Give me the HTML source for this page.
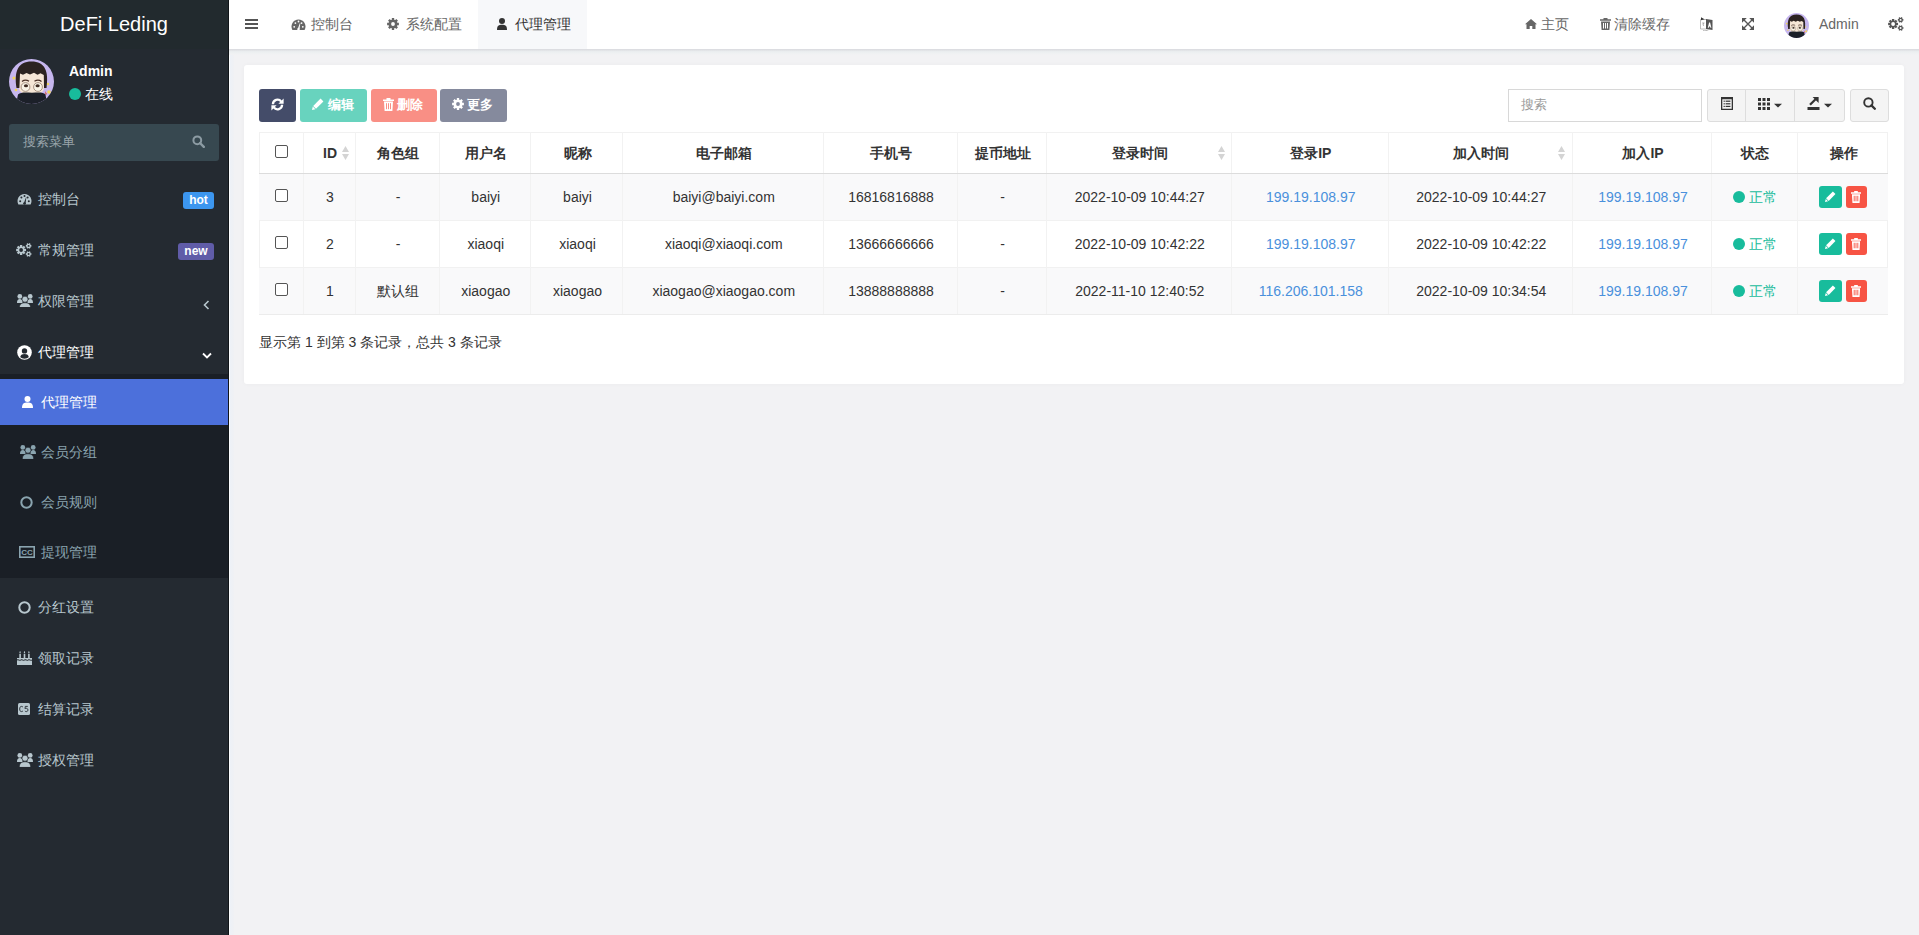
<!DOCTYPE html>
<html><head><meta charset="utf-8">
<style>
*{margin:0;padding:0;box-sizing:border-box}
html,body{width:1919px;height:935px;overflow:hidden;background:#f2f2f4;font-family:"Liberation Sans",sans-serif;font-size:14px;color:#333}
.abs{position:absolute}
svg{display:block}
/* sidebar */
#side{position:absolute;left:0;top:0;width:229px;height:935px;background:#242a31}
#side .edge{position:absolute;left:228px;top:0;width:1px;height:935px;background:#111519;z-index:5}
#logo{position:absolute;left:0;top:0;width:228px;height:49px;line-height:49px;text-align:center;color:#fff;font-size:20px;background:#222a2e}
.mi{position:absolute;left:0;width:228px;height:51px;color:#b8c7ce;font-size:14px}
.mi .t{position:absolute;left:38px;top:0;line-height:51px}
.mi .ic{position:absolute;left:17px;top:19px}
.sub{position:absolute;left:0;top:374px;width:228px;height:204px;background:#1a1f26}
.si{position:absolute;left:0;width:228px;height:50px;color:#8aa4af;font-size:14px}
.si .t{position:absolute;left:41px;top:0;line-height:50px}
.si .ic{position:absolute;left:20px;top:18px}
/* header */
#hdr{position:absolute;left:229px;top:0;width:1690px;height:49px;background:#fff}
#hdrline{position:absolute;left:229px;top:49px;width:1690px;height:6px;background:linear-gradient(#dcdde1 0,#dcdde1 1px,#e9ecee 2px,#eef1f2 4px,#f2f2f4 6px)}
.tab{position:absolute;top:0;height:49px;line-height:48px;color:#666;font-size:14px}
/* panel */
#panel{position:absolute;left:244px;top:65px;width:1660px;height:319px;background:#fff;border-radius:3px;box-shadow:0 0 4px rgba(0,0,0,.035)}
.btn{position:absolute;top:89px;height:33px;border-radius:3px;color:#fff;font-size:13px;line-height:31px}
.ok{color:#18bc9c}
.tc{text-align:center;line-height:18px;white-space:nowrap;color:#333}
.th{font-weight:bold}
.tc.ip{color:#4a90dc}
.cb{width:13px;height:13px;border:1px solid #555;border-radius:2px;background:#fff}
.c{display:inline-block;width:1em;text-align:center;font-style:normal}
</style></head><body>

<div id="side">
  <div class="edge"></div>
  <div id="logo">DeFi Leding</div>
  <svg class="abs" style="left:9px;top:59px" width="45" height="45" viewBox="0 0 45 45"><defs><clipPath id="av"><circle cx="22.5" cy="22.5" r="22.5"/></clipPath></defs>
    <g clip-path="url(#av)">
      <rect width="45" height="45" fill="#c6b6ee"/>
      <circle cx="5" cy="19" r="1.6" fill="#f2d65a"/><circle cx="7" cy="31" r="1.3" fill="#f2d65a"/><circle cx="40" cy="33" r="1.8" fill="#f2d65a"/><circle cx="39" cy="25" r="1.2" fill="#f2d65a"/>
      <path d="M36 32 L38 35 L36.5 36 Z" fill="#e0584a"/>
      <path d="M10.5 13 L35 13 L35 29 C34.5 33.5 31 35.5 22.5 35.5 C14 35.5 10.5 33.5 10 29 Z" fill="#f6e6d6"/>
      <path d="M7.5 29 C5 12 9 2.5 22.5 2.5 C36 2.5 40 12 37.5 29 L35 29 L34.8 16 L31.5 14.2 L28.5 15.8 L25 13.8 L21 15.6 L17.5 14 L14 15.8 L11 14.6 L10.4 29 Z" fill="#2c2321"/>
      <path d="M13 22.5 C15 21 18 21 20 22.3 M25.5 22.3 C27.5 21 30.5 21 32.5 22.5" stroke="#4a3026" stroke-width="1.3" fill="none"/>
      <circle cx="16.5" cy="28" r="4.4" fill="#f9f3e6" stroke="#a08a7a" stroke-width="0.9"/>
      <circle cx="29" cy="28" r="4.4" fill="#f9f3e6" stroke="#a08a7a" stroke-width="0.9"/>
      <ellipse cx="17" cy="26.8" rx="2.1" ry="1.5" fill="#3e2a22"/>
      <ellipse cx="28.6" cy="26.8" rx="2.1" ry="1.5" fill="#3e2a22"/>
      <path d="M7 45 L9 35.5 C12 33 16 33.3 23 33.8 C30 33.3 34 33 36.5 35.5 L38 45 Z" fill="#1c2029"/>
    </g></svg>
  <div class="abs" style="left:69px;top:62px;font-weight:bold;color:#fff;font-size:14px;line-height:18px">Admin</div>
  <div class="abs" style="left:69px;top:88px;width:12px;height:12px;border-radius:50%;background:#18bc9c"></div>
  <div class="abs" style="left:85px;top:85px;color:#fff;font-size:14px;line-height:18px"><i class="c">在</i><i class="c">线</i></div>
  <div class="abs" style="left:9px;top:124px;width:210px;height:37px;border-radius:3px;background:#374850"></div>
  <div class="abs" style="left:23px;top:133px;color:#9aa5ab;font-size:13px;line-height:18px"><i class="c">搜</i><i class="c">索</i><i class="c">菜</i><i class="c">单</i></div>
  <svg class="abs" style="left:192px;top:135px" width="13" height="13" viewBox="0 0 13 13"><circle cx="5.3" cy="5.3" r="3.9" fill="none" stroke="#8c9ba3" stroke-width="2"/><path d="M8 8 L11.8 11.8" stroke="#8c9ba3" stroke-width="2.4" stroke-linecap="round"/></svg>

  <!-- menu -->
  <div class="mi" style="top:174px"><svg class="ic" style="top:19px" width="15" height="12" viewBox="0 0 15 12"><path d="M1.4 11.5 A7 7 0 1 1 13.6 11.5 Z" fill="#b8c7ce"/><g fill="#242a31"><circle cx="3.2" cy="8.3" r="1"/><circle cx="4.4" cy="4.6" r="1"/><circle cx="7.5" cy="3" r="1"/><circle cx="10.6" cy="4.6" r="1"/><circle cx="11.8" cy="8.3" r="1"/><path d="M6.5 11 L9 4.3 L9.3 4.4 L8.5 11 Z"/><circle cx="7.5" cy="10.5" r="1.3"/></g></svg><span class="t"><i class="c">控</i><i class="c">制</i><i class="c">台</i></span></div>
  <div class="abs" style="left:183px;top:192px;width:31px;height:17px;border-radius:3px;background:#3c96ef;color:#fff;font-weight:bold;font-size:12px;line-height:16px;text-align:center">hot</div>

  <div class="mi" style="top:225px"><svg class="ic" style="top:18px;left:16px" width="16" height="14" viewBox="0 0 16 14"><g fill="#b8c7ce" fill-rule="evenodd"><path d="M8.63 5.88 L10.06 5.81 L10.06 8.19 L8.63 8.12 L8.38 8.71 L9.45 9.66 L7.76 11.35 L6.81 10.28 L6.22 10.53 L6.29 11.96 L3.91 11.96 L3.98 10.53 L3.39 10.28 L2.44 11.35 L0.75 9.66 L1.82 8.71 L1.57 8.12 L0.14 8.19 L0.14 5.81 L1.57 5.88 L1.82 5.29 L0.75 4.34 L2.44 2.65 L3.39 3.72 L3.98 3.47 L3.91 2.04 L6.29 2.04 L6.22 3.47 L6.81 3.72 L7.76 2.65 L9.45 4.34 L8.38 5.29 Z M7.00 7.00 A1.9 1.9 0 1 0 3.20 7.00 A1.9 1.9 0 1 0 7.00 7.00 Z"/><path d="M14.44 2.11 L15.36 2.00 L15.36 3.80 L14.44 3.69 L14.21 4.09 L14.76 4.84 L13.20 5.74 L12.83 4.89 L12.37 4.89 L12.00 5.74 L10.44 4.84 L10.99 4.09 L10.76 3.69 L9.84 3.80 L9.84 2.00 L10.76 2.11 L10.99 1.71 L10.44 0.96 L12.00 0.06 L12.37 0.91 L12.83 0.91 L13.20 0.06 L14.76 0.96 L14.21 1.71 Z M13.55 2.90 A0.95 0.95 0 1 0 11.65 2.90 A0.95 0.95 0 1 0 13.55 2.90 Z"/><path d="M14.44 10.21 L15.36 10.10 L15.36 11.90 L14.44 11.79 L14.21 12.19 L14.76 12.94 L13.20 13.84 L12.83 12.99 L12.37 12.99 L12.00 13.84 L10.44 12.94 L10.99 12.19 L10.76 11.79 L9.84 11.90 L9.84 10.10 L10.76 10.21 L10.99 9.81 L10.44 9.06 L12.00 8.16 L12.37 9.01 L12.83 9.01 L13.20 8.16 L14.76 9.06 L14.21 9.81 Z M13.55 11.00 A0.95 0.95 0 1 0 11.65 11.00 A0.95 0.95 0 1 0 13.55 11.00 Z"/></g></svg><span class="t"><i class="c">常</i><i class="c">规</i><i class="c">管</i><i class="c">理</i></span></div>
  <div class="abs" style="left:178px;top:243px;width:36px;height:17px;border-radius:3px;background:#605ca8;color:#fff;font-weight:bold;font-size:12px;line-height:16px;text-align:center">new</div>

  <div class="mi" style="top:276px"><svg class="ic" style="top:18px" width="16" height="13" viewBox="0 0 16 13"><g fill="#b8c7ce"><circle cx="2.8" cy="2.4" r="2.4"/><circle cx="13.2" cy="2.4" r="2.4"/><path d="M0 9 C0 6 1 5 2.8 5 C4.6 5 5.6 6 5.6 9 Z"/><path d="M16 9 C16 6 15 5 13.2 5 C11.4 5 10.4 6 10.4 9 Z"/></g><g fill="#b8c7ce" stroke="#242a31" stroke-width="0.6"><circle cx="8" cy="5.2" r="3"/><path d="M2.3 14.4 C2.3 10.4 4.4 8.8 8 8.8 C11.6 8.8 13.7 10.4 13.7 14.4 Z"/></g></svg><span class="t"><i class="c">权</i><i class="c">限</i><i class="c">管</i><i class="c">理</i></span>
    <svg class="abs" style="left:203px;top:24px" width="7" height="10" viewBox="0 0 7 10"><path d="M5.5 1 L1.5 5 L5.5 9" fill="none" stroke="#b8c7ce" stroke-width="1.6"/></svg></div>

  <div class="mi" style="top:327px;color:#fff"><svg class="ic" style="top:18px" width="15" height="15" viewBox="0 0 15 15"><circle cx="7.5" cy="7.5" r="7.3" fill="#fff"/><circle cx="7.5" cy="5.9" r="2.7" fill="#242a31"/><path d="M3.2 12 C3.8 9.6 5.4 9 7.5 9 C9.6 9 11.2 9.6 11.8 12 C10.7 13.1 9.2 13.7 7.5 13.7 C5.8 13.7 4.3 13.1 3.2 12Z" fill="#242a31"/></svg><span class="t"><i class="c">代</i><i class="c">理</i><i class="c">管</i><i class="c">理</i></span>
    <svg class="abs" style="left:202px;top:25px" width="10" height="7" viewBox="0 0 10 7"><path d="M1 1.5 L5 5.5 L9 1.5" fill="none" stroke="#fff" stroke-width="1.8"/></svg></div>

  <div class="sub">
    <div class="abs" style="left:0;top:5px;width:228px;height:46px;background:#4c70db"></div>
  </div>
  <div class="si" style="top:377px;color:#fff"><svg class="ic" style="top:19px;left:22px" width="11" height="12" viewBox="0 0 11 12"><circle cx="5.5" cy="3" r="3" fill="#fff"/><path d="M0 12 C0 7.5 2 6.5 5.5 6.5 C9 6.5 11 7.5 11 12Z" fill="#fff"/></svg><span class="t"><i class="c">代</i><i class="c">理</i><i class="c">管</i><i class="c">理</i></span></div>
  <div class="si" style="top:427px"><svg class="ic" style="top:18px" width="16" height="14" viewBox="0 0 16 14"><g fill="#8aa4af"><circle cx="2.8" cy="2.4" r="2.4"/><circle cx="13.2" cy="2.4" r="2.4"/><path d="M0 9 C0 6 1 5 2.8 5 C4.6 5 5.6 6 5.6 9 Z"/><path d="M16 9 C16 6 15 5 13.2 5 C11.4 5 10.4 6 10.4 9 Z"/></g><g fill="#8aa4af" stroke="#1a1f26" stroke-width="0.6"><circle cx="8" cy="5.2" r="3"/><path d="M2.3 14.4 C2.3 10.4 4.4 8.8 8 8.8 C11.6 8.8 13.7 10.4 13.7 14.4 Z"/></g></svg><span class="t"><i class="c">会</i><i class="c">员</i><i class="c">分</i><i class="c">组</i></span></div>
  <div class="si" style="top:477px"><svg class="ic" style="top:19px;left:20px" width="13" height="13" viewBox="0 0 13 13"><circle cx="6.5" cy="6.5" r="5.2" fill="none" stroke="#8aa4af" stroke-width="2"/></svg><span class="t"><i class="c">会</i><i class="c">员</i><i class="c">规</i><i class="c">则</i></span></div>
  <div class="si" style="top:527px"><svg class="ic" style="top:19px;left:19px" width="16" height="12" viewBox="0 0 16 12"><rect x="0.8" y="0.8" width="14.4" height="10.4" fill="none" stroke="#8aa4af" stroke-width="1.6"/><text x="8" y="9.3" font-size="8" font-weight="bold" text-anchor="middle" fill="#8aa4af" font-family="Liberation Sans">CC</text></svg><span class="t"><i class="c">提</i><i class="c">现</i><i class="c">管</i><i class="c">理</i></span></div>

  <div class="mi" style="top:582px"><svg class="ic" style="top:19px;left:18px" width="13" height="13" viewBox="0 0 13 13"><circle cx="6.5" cy="6.5" r="5.2" fill="none" stroke="#b8c7ce" stroke-width="2"/></svg><span class="t"><i class="c">分</i><i class="c">红</i><i class="c">设</i><i class="c">置</i></span></div>
  <div class="mi" style="top:633px"><svg class="ic" style="top:18px" width="15" height="14" viewBox="0 0 15 14"><g fill="#b8c7ce"><path d="M0 9.5 C1.5 8.5 2.5 10.5 3.75 9.5 C5 8.5 6.2 10.5 7.5 9.5 C8.8 8.5 10 10.5 11.25 9.5 C12.5 8.5 13.5 10.5 15 9.5 L15 14 L0 14 Z"/><path d="M0 7 L15 7 L15 8.6 C13.5 9.6 12.5 7.6 11.25 8.6 C10 9.6 8.8 7.6 7.5 8.6 C6.2 9.6 5 7.6 3.75 8.6 C2.5 9.6 1.5 7.6 0 8.6 Z"/><rect x="2.3" y="2.8" width="1.6" height="4.2"/><rect x="6.7" y="2.8" width="1.6" height="4.2"/><rect x="11.1" y="2.8" width="1.6" height="4.2"/><path d="M3.1 0 C4 1 4 2 3.1 2.3 C2.2 2 2.2 1 3.1 0Z M7.5 0 C8.4 1 8.4 2 7.5 2.3 C6.6 2 6.6 1 7.5 0Z M11.9 0 C12.8 1 12.8 2 11.9 2.3 C11 2 11 1 11.9 0Z"/></g></svg><span class="t"><i class="c">领</i><i class="c">取</i><i class="c">记</i><i class="c">录</i></span></div>
  <div class="mi" style="top:684px"><svg class="ic" style="top:19px;left:18px" width="12" height="12" viewBox="0 0 12 12"><rect x="0" y="0" width="12" height="12" rx="1.5" fill="#b8c7ce"/><path d="M5 4.2 C4.6 3.6 4 3.4 3.4 3.4 C2.3 3.4 1.7 4.4 1.7 6 C1.7 7.6 2.3 8.6 3.4 8.6 C4 8.6 4.6 8.4 5 7.8" fill="none" stroke="#242a31" stroke-width="0.9"/><path d="M9.8 3.4 L7.3 3.4 L7 5.7 C7.4 5.4 7.9 5.3 8.3 5.3 C9.3 5.3 9.9 6 9.9 7 C9.9 8 9.2 8.6 8.3 8.6 C7.7 8.6 7.2 8.4 6.9 8" fill="none" stroke="#242a31" stroke-width="0.9"/></svg><span class="t"><i class="c">结</i><i class="c">算</i><i class="c">记</i><i class="c">录</i></span></div>
  <div class="mi" style="top:735px"><svg class="ic" style="top:18px" width="16" height="14" viewBox="0 0 16 14"><g fill="#b8c7ce"><circle cx="2.8" cy="2.4" r="2.4"/><circle cx="13.2" cy="2.4" r="2.4"/><path d="M0 9 C0 6 1 5 2.8 5 C4.6 5 5.6 6 5.6 9 Z"/><path d="M16 9 C16 6 15 5 13.2 5 C11.4 5 10.4 6 10.4 9 Z"/></g><g fill="#b8c7ce" stroke="#242a31" stroke-width="0.6"><circle cx="8" cy="5.2" r="3"/><path d="M2.3 14.4 C2.3 10.4 4.4 8.8 8 8.8 C11.6 8.8 13.7 10.4 13.7 14.4 Z"/></g></svg><span class="t"><i class="c">授</i><i class="c">权</i><i class="c">管</i><i class="c">理</i></span></div>
</div>

<div class="abs" style="left:229px;top:49px;width:1px;height:886px;background:#fafcfe"></div>
<div class="abs" style="left:230px;top:49px;width:4px;height:886px;background:linear-gradient(90deg,#edf1f7,#f0f1f4)"></div>
<div id="hdr">
  <svg class="abs" style="left:16px;top:19px" width="13" height="10" viewBox="0 0 13 10"><g fill="#555"><rect y="0" width="13" height="2"/><rect y="4" width="13" height="2"/><rect y="8" width="13" height="2"/></g></svg>
  <svg class="abs" style="left:62px;top:19px" width="15" height="11" viewBox="0 0 15 11"><path d="M1.4 11 A7 7 0 1 1 13.6 11 Z" fill="#666"/><g fill="#fff"><circle cx="3.2" cy="7.8" r="0.9"/><circle cx="4.4" cy="4.1" r="0.9"/><circle cx="7.5" cy="2.5" r="0.9"/><circle cx="10.6" cy="4.1" r="0.9"/><circle cx="11.8" cy="7.8" r="0.9"/><path d="M6.5 10.6 L9 3.8 L9.3 3.9 L8.5 10.6 Z"/><circle cx="7.5" cy="10.1" r="1.2"/></g></svg>
  <div class="tab" style="left:82px"><i class="c">控</i><i class="c">制</i><i class="c">台</i></div>
  <svg class="abs" style="left:158px;top:18px" width="12" height="12" viewBox="0 0 12 12"><path fill-rule="evenodd" d="M10.35 4.86 L11.88 4.83 L11.88 7.17 L10.35 7.14 L9.88 8.28 L10.99 9.33 L9.33 10.99 L8.28 9.88 L7.14 10.35 L7.17 11.88 L4.83 11.88 L4.86 10.35 L3.72 9.88 L2.67 10.99 L1.01 9.33 L2.12 8.28 L1.65 7.14 L0.12 7.17 L0.12 4.83 L1.65 4.86 L2.12 3.72 L1.01 2.67 L2.67 1.01 L3.72 2.12 L4.86 1.65 L4.83 0.12 L7.17 0.12 L7.14 1.65 L8.28 2.12 L9.33 1.01 L10.99 2.67 L9.88 3.72 Z M7.90 6.00 A1.9 1.9 0 1 0 4.10 6.00 A1.9 1.9 0 1 0 7.90 6.00 Z" fill="#666"/></svg>
  <div class="tab" style="left:177px"><i class="c">系</i><i class="c">统</i><i class="c">配</i><i class="c">置</i></div>
  <div class="abs" style="left:249px;top:0;width:109px;height:49px;background:#f7f8fa"></div>
  <svg class="abs" style="left:268px;top:18px" width="10" height="12" viewBox="0 0 10 12"><circle cx="5" cy="3" r="3" fill="#333"/><path d="M0 12 C0 7.5 1.8 6.8 5 6.8 C8.2 6.8 10 7.5 10 12Z" fill="#333"/></svg>
  <div class="tab" style="left:286px;color:#333"><i class="c">代</i><i class="c">理</i><i class="c">管</i><i class="c">理</i></div>

  <svg class="abs" style="left:1296px;top:19px" width="12" height="10" viewBox="0 0 12 10"><path d="M6 0 L12 5.2 L10.5 5.2 L10.5 10 L7.3 10 L7.3 7 L4.7 7 L4.7 10 L1.5 10 L1.5 5.2 L0 5.2 Z" fill="#666"/></svg>
  <div class="tab" style="left:1312px"><i class="c">主</i><i class="c">页</i></div>
  <svg class="abs" style="left:1371px;top:18px" width="11" height="12" viewBox="0 0 11 12"><path d="M3.5 0h4v1.2h3.5v1.6h-11v-1.6h3.5zM1 3.5h9l-0.6 8.5h-7.8z" fill="#666"/><g fill="#fff"><rect x="3" y="5" width="1" height="5.5"/><rect x="5" y="5" width="1" height="5.5"/><rect x="7" y="5" width="1" height="5.5"/></g></svg>
  <div class="tab" style="left:1385px"><i class="c">清</i><i class="c">除</i><i class="c">缓</i><i class="c">存</i></div>
  <svg class="abs" style="left:1471px;top:17px" width="13" height="14" viewBox="0 0 13 14"><path d="M0.5 2.5 L6.5 2.5 L6.5 12 L0.5 12 Z" fill="#fff" stroke="#aaa" stroke-width="0.8"/><path d="M6 2 L12.5 3 L12.5 13 L6 12 Z" fill="#555"/><path d="M7.8 10.8 L9.1 5.5 L10.1 5.5 L11.4 10.8 L10.4 10.8 L10.1 9.4 L9.1 9.4 L8.8 10.8Z" fill="#fff"/><path d="M1 0.3 L4.5 2.3 L1 3.2 Z" fill="#333"/><path d="M2.5 7 L4.5 6 M3 5 L3.5 9" stroke="#999" stroke-width="0.7"/><path d="M3 13.6 C5 14 7 13.6 8.5 12.8" stroke="#999" stroke-width="0.7" fill="none"/></svg>
  <svg class="abs" style="left:1513px;top:18px" width="12" height="12" viewBox="0 0 12 12"><path d="M1.5 1.5 L10.5 10.5 M10.5 1.5 L1.5 10.5" stroke="#555" stroke-width="1.4"/><path d="M0 0 H4.8 L0 4.8 Z M12 0 V4.8 L7.2 0 Z M0 12 V7.2 L4.8 12 Z M12 12 H7.2 L12 7.2 Z" fill="#555"/></svg>
  <svg class="abs" style="left:1555px;top:13px" width="25" height="25" viewBox="0 0 45 45"><defs><clipPath id="av2"><circle cx="22.5" cy="22.5" r="22.5"/></clipPath></defs>
    <g clip-path="url(#av2)">
      <rect width="45" height="45" fill="#c6b6ee"/>
      <circle cx="5" cy="19" r="1.6" fill="#f2d65a"/><circle cx="7" cy="31" r="1.3" fill="#f2d65a"/><circle cx="40" cy="33" r="1.8" fill="#f2d65a"/><circle cx="39" cy="25" r="1.2" fill="#f2d65a"/>
      <path d="M36 32 L38 35 L36.5 36 Z" fill="#e0584a"/>
      <path d="M10.5 13 L35 13 L35 29 C34.5 33.5 31 35.5 22.5 35.5 C14 35.5 10.5 33.5 10 29 Z" fill="#f6e6d6"/>
      <path d="M7.5 29 C5 12 9 2.5 22.5 2.5 C36 2.5 40 12 37.5 29 L35 29 L34.8 16 L31.5 14.2 L28.5 15.8 L25 13.8 L21 15.6 L17.5 14 L14 15.8 L11 14.6 L10.4 29 Z" fill="#2c2321"/>
      <path d="M13 22.5 C15 21 18 21 20 22.3 M25.5 22.3 C27.5 21 30.5 21 32.5 22.5" stroke="#4a3026" stroke-width="1.3" fill="none"/>
      <circle cx="16.5" cy="28" r="4.4" fill="#f9f3e6" stroke="#a08a7a" stroke-width="0.9"/>
      <circle cx="29" cy="28" r="4.4" fill="#f9f3e6" stroke="#a08a7a" stroke-width="0.9"/>
      <ellipse cx="17" cy="26.8" rx="2.1" ry="1.5" fill="#3e2a22"/>
      <ellipse cx="28.6" cy="26.8" rx="2.1" ry="1.5" fill="#3e2a22"/>
      <path d="M7 45 L9 35.5 C12 33 16 33.3 23 33.8 C30 33.3 34 33 36.5 35.5 L38 45 Z" fill="#1c2029"/>
    </g></svg>
  <div class="tab" style="left:1590px">Admin</div>
  <svg class="abs" style="left:1659px;top:17px" width="16" height="14" viewBox="0 0 16 14"><g fill="#555" fill-rule="evenodd"><path d="M8.63 5.88 L10.06 5.81 L10.06 8.19 L8.63 8.12 L8.38 8.71 L9.45 9.66 L7.76 11.35 L6.81 10.28 L6.22 10.53 L6.29 11.96 L3.91 11.96 L3.98 10.53 L3.39 10.28 L2.44 11.35 L0.75 9.66 L1.82 8.71 L1.57 8.12 L0.14 8.19 L0.14 5.81 L1.57 5.88 L1.82 5.29 L0.75 4.34 L2.44 2.65 L3.39 3.72 L3.98 3.47 L3.91 2.04 L6.29 2.04 L6.22 3.47 L6.81 3.72 L7.76 2.65 L9.45 4.34 L8.38 5.29 Z M7.00 7.00 A1.9 1.9 0 1 0 3.20 7.00 A1.9 1.9 0 1 0 7.00 7.00 Z"/><path d="M14.44 2.11 L15.36 2.00 L15.36 3.80 L14.44 3.69 L14.21 4.09 L14.76 4.84 L13.20 5.74 L12.83 4.89 L12.37 4.89 L12.00 5.74 L10.44 4.84 L10.99 4.09 L10.76 3.69 L9.84 3.80 L9.84 2.00 L10.76 2.11 L10.99 1.71 L10.44 0.96 L12.00 0.06 L12.37 0.91 L12.83 0.91 L13.20 0.06 L14.76 0.96 L14.21 1.71 Z M13.55 2.90 A0.95 0.95 0 1 0 11.65 2.90 A0.95 0.95 0 1 0 13.55 2.90 Z"/><path d="M14.44 10.21 L15.36 10.10 L15.36 11.90 L14.44 11.79 L14.21 12.19 L14.76 12.94 L13.20 13.84 L12.83 12.99 L12.37 12.99 L12.00 13.84 L10.44 12.94 L10.99 12.19 L10.76 11.79 L9.84 11.90 L9.84 10.10 L10.76 10.21 L10.99 9.81 L10.44 9.06 L12.00 8.16 L12.37 9.01 L12.83 9.01 L13.20 8.16 L14.76 9.06 L14.21 9.81 Z M13.55 11.00 A0.95 0.95 0 1 0 11.65 11.00 A0.95 0.95 0 1 0 13.55 11.00 Z"/></g></svg>
</div>
<div id="hdrline"></div>
<div id="panel"></div>
<div class="btn" style="left:259px;width:37px;background:#444c69"><svg class="abs" style="left:12px;top:9px" width="13" height="13" viewBox="0 0 13 13"><path d="M1.9 6.2 A4.6 4.6 0 0 1 10.2 3.6" fill="none" stroke="#fff" stroke-width="2.3"/><path d="M12.6 0.6 L12.6 5.8 L7.4 5.8 Z" fill="#fff"/><path d="M11.1 6.8 A4.6 4.6 0 0 1 2.8 9.4" fill="none" stroke="#fff" stroke-width="2.3"/><path d="M0.4 12.4 L0.4 7.2 L5.6 7.2 Z" fill="#fff"/></svg></div>
<div class="btn" style="left:300px;width:67px;background:#68d3be"><svg class="abs" style="left:12px;top:9px" width="12" height="12" viewBox="0 0 12 12"><path d="M8.6 0.6 L11.4 3.4 L4 10.8 L1.2 8 Z" fill="#fff"/><path d="M0.8 8.6 L3.4 11.2 L0 12 Z" fill="#fff"/></svg><span class="abs" style="left:28px;top:0;font-weight:bold"><i class="c">编</i><i class="c">辑</i></span></div>
<div class="btn" style="left:371px;width:66px;background:#f98f85"><svg class="abs" style="left:12px;top:9px" width="11" height="13" viewBox="0 0 11 13"><path d="M3.5 0h4v1.4h3.5v1.6h-11v-1.6h3.5zM1 3.6h9l-0.6 9.4h-7.8z" fill="#fff"/><g fill="#f98f85"><rect x="3" y="5.2" width="1" height="6"/><rect x="5" y="5.2" width="1" height="6"/><rect x="7" y="5.2" width="1" height="6"/></g></svg><span class="abs" style="left:26px;top:0;font-weight:bold"><i class="c">删</i><i class="c">除</i></span></div>
<div class="btn" style="left:440px;width:67px;background:#858a9d"><svg class="abs" style="left:12px;top:9px" width="12" height="12" viewBox="0 0 12 12"><path fill-rule="evenodd" d="M10.35 4.86 L11.88 4.83 L11.88 7.17 L10.35 7.14 L9.88 8.28 L10.99 9.33 L9.33 10.99 L8.28 9.88 L7.14 10.35 L7.17 11.88 L4.83 11.88 L4.86 10.35 L3.72 9.88 L2.67 10.99 L1.01 9.33 L2.12 8.28 L1.65 7.14 L0.12 7.17 L0.12 4.83 L1.65 4.86 L2.12 3.72 L1.01 2.67 L2.67 1.01 L3.72 2.12 L4.86 1.65 L4.83 0.12 L7.17 0.12 L7.14 1.65 L8.28 2.12 L9.33 1.01 L10.99 2.67 L9.88 3.72 Z M7.90 6.00 A1.9 1.9 0 1 0 4.10 6.00 A1.9 1.9 0 1 0 7.90 6.00 Z" fill="#fff"/></svg><span class="abs" style="left:27px;top:0;font-weight:bold"><i class="c">更</i><i class="c">多</i></span></div>

<div class="abs" style="left:1508px;top:89px;width:194px;height:33px;border:1px solid #d8d8d8;background:#fff"></div>
<div class="abs" style="left:1521px;top:96px;color:#999;font-size:13px;line-height:18px"><i class="c">搜</i><i class="c">索</i></div>
<div class="abs" style="left:1707px;top:89px;width:138px;height:33px;border:1px solid #ddd;border-radius:3px;background:#f4f4f4"></div>
<div class="abs" style="left:1745px;top:90px;width:1px;height:31px;background:#ddd"></div>
<div class="abs" style="left:1794px;top:90px;width:1px;height:31px;background:#ddd"></div>
<svg class="abs" style="left:1721px;top:97px" width="12" height="13" viewBox="0 0 12 13"><path d="M0 0 H12 V13 H0 Z M1.3 2.2 V11.7 H10.7 V2.2 Z" fill="#333" fill-rule="evenodd"/><g fill="#333"><rect x="2.6" y="3.6" width="1.2" height="1.2"/><rect x="4.6" y="3.6" width="4.8" height="1.2"/><rect x="2.6" y="6.2" width="1.2" height="1.2"/><rect x="4.6" y="6.2" width="4.8" height="1.2"/><rect x="2.6" y="8.8" width="1.2" height="1.2"/><rect x="4.6" y="8.8" width="4.8" height="1.2"/></g></svg>
<svg class="abs" style="left:1758px;top:98px" width="25" height="12" viewBox="0 0 25 12"><g fill="#333"><rect x="0" y="0" width="3" height="3"/><rect x="4.5" y="0" width="3" height="3"/><rect x="9" y="0" width="3" height="3"/><rect x="0" y="4.5" width="3" height="3"/><rect x="4.5" y="4.5" width="3" height="3"/><rect x="9" y="4.5" width="3" height="3"/><rect x="0" y="9" width="3" height="3"/><rect x="4.5" y="9" width="3" height="3"/><rect x="9" y="9" width="3" height="3"/><path d="M16 5.8 L24 5.8 L20 9.6 Z"/></g></svg>
<svg class="abs" style="left:1807px;top:97px" width="26" height="13" viewBox="0 0 26 13"><g fill="#333"><rect x="0.5" y="10" width="12" height="3"/><path d="M5.6 0 L11.6 0 L11.6 6 Z"/></g><path d="M3 7.8 L8.8 2" stroke="#333" stroke-width="2.2"/><path d="M17 6.8 L25 6.8 L21 10.6 Z" fill="#333"/></svg>
<div class="abs" style="left:1850px;top:89px;width:39px;height:33px;border:1px solid #ddd;border-radius:3px;background:#f4f4f4"></div>
<svg class="abs" style="left:1863px;top:97px" width="13" height="13" viewBox="0 0 13 13"><circle cx="5.4" cy="5.4" r="4.2" fill="none" stroke="#333" stroke-width="1.9"/><path d="M8.4 8.4 L11.8 11.8" stroke="#333" stroke-width="2.3" stroke-linecap="round"/></svg>


<div class="abs" style="left:259px;top:132px;width:1629px;height:183px;border:1px solid #f1f1f1"></div>
<div class="abs" style="left:259px;top:174px;width:1629px;height:46px;background:#f9f9fa"></div>
<div class="abs" style="left:259px;top:268px;width:1629px;height:46px;background:#f9f9fa"></div>
<div class="abs" style="left:259px;top:220px;width:1629px;height:1px;background:#f1f1f1"></div>
<div class="abs" style="left:259px;top:267px;width:1629px;height:1px;background:#f1f1f1"></div>
<div class="abs" style="left:259px;top:314px;width:1629px;height:1px;background:#ececec"></div>
<div class="abs" style="left:303px;top:132px;width:1px;height:182px;background:#f2f2f2"></div>
<div class="abs" style="left:355px;top:132px;width:1px;height:182px;background:#f2f2f2"></div>
<div class="abs" style="left:439px;top:132px;width:1px;height:182px;background:#f2f2f2"></div>
<div class="abs" style="left:530px;top:132px;width:1px;height:182px;background:#f2f2f2"></div>
<div class="abs" style="left:622px;top:132px;width:1px;height:182px;background:#f2f2f2"></div>
<div class="abs" style="left:823px;top:132px;width:1px;height:182px;background:#f2f2f2"></div>
<div class="abs" style="left:957px;top:132px;width:1px;height:182px;background:#f2f2f2"></div>
<div class="abs" style="left:1046px;top:132px;width:1px;height:182px;background:#f2f2f2"></div>
<div class="abs" style="left:1231px;top:132px;width:1px;height:182px;background:#f2f2f2"></div>
<div class="abs" style="left:1388px;top:132px;width:1px;height:182px;background:#f2f2f2"></div>
<div class="abs" style="left:1572px;top:132px;width:1px;height:182px;background:#f2f2f2"></div>
<div class="abs" style="left:1711px;top:132px;width:1px;height:182px;background:#f2f2f2"></div>
<div class="abs" style="left:1797px;top:132px;width:1px;height:182px;background:#f2f2f2"></div>
<div class="abs" style="left:259px;top:173px;width:1629px;height:1px;background:#dcdcdc"></div>
<div class="abs cb" style="left:275px;top:145px"></div>
<div class="abs tc th" style="left:304px;top:144px;width:52px;">ID</div>
<div class="abs tc th" style="left:356px;top:144px;width:84px;"><i class="c">角</i><i class="c">色</i><i class="c">组</i></div>
<div class="abs tc th" style="left:440px;top:144px;width:91.5px;"><i class="c">用</i><i class="c">户</i><i class="c">名</i></div>
<div class="abs tc th" style="left:531.5px;top:144px;width:92.0px;"><i class="c">昵</i><i class="c">称</i></div>
<div class="abs tc th" style="left:623.5px;top:144px;width:200.5px;"><i class="c">电</i><i class="c">子</i><i class="c">邮</i><i class="c">箱</i></div>
<div class="abs tc th" style="left:824px;top:144px;width:134px;"><i class="c">手</i><i class="c">机</i><i class="c">号</i></div>
<div class="abs tc th" style="left:958px;top:144px;width:89px;"><i class="c">提</i><i class="c">币</i><i class="c">地</i><i class="c">址</i></div>
<div class="abs tc th" style="left:1047px;top:144px;width:185.5px;"><i class="c">登</i><i class="c">录</i><i class="c">时</i><i class="c">间</i></div>
<div class="abs tc th" style="left:1232.5px;top:144px;width:156.5px;"><i class="c">登</i><i class="c">录</i>IP</div>
<div class="abs tc th" style="left:1389px;top:144px;width:184.5px;"><i class="c">加</i><i class="c">入</i><i class="c">时</i><i class="c">间</i></div>
<div class="abs tc th" style="left:1573.5px;top:144px;width:139.0px;"><i class="c">加</i><i class="c">入</i>IP</div>
<div class="abs tc th" style="left:1712.5px;top:144px;width:85.5px;"><i class="c">状</i><i class="c">态</i></div>
<div class="abs tc th" style="left:1798px;top:144px;width:91px;"><i class="c">操</i><i class="c">作</i></div>
<svg class="abs" style="left:342px;top:146px" width="7" height="14" viewBox="0 0 7 14"><path d="M3.5 0 L7 6 L0 6 Z M3.5 14 L7 8 L0 8 Z" fill="#d4d4d4"/></svg>
<svg class="abs" style="left:1218px;top:146px" width="7" height="14" viewBox="0 0 7 14"><path d="M3.5 0 L7 6 L0 6 Z M3.5 14 L7 8 L0 8 Z" fill="#d4d4d4"/></svg>
<svg class="abs" style="left:1558px;top:146px" width="7" height="14" viewBox="0 0 7 14"><path d="M3.5 0 L7 6 L0 6 Z M3.5 14 L7 8 L0 8 Z" fill="#d4d4d4"/></svg>
<div class="abs cb" style="left:275px;top:189px"></div>
<div class="abs tc " style="left:304px;top:188px;width:52px;">3</div>
<div class="abs tc " style="left:356px;top:188px;width:84px;">-</div>
<div class="abs tc " style="left:440px;top:188px;width:91.5px;">baiyi</div>
<div class="abs tc " style="left:531.5px;top:188px;width:92.0px;">baiyi</div>
<div class="abs tc " style="left:623.5px;top:188px;width:200.5px;">baiyi@baiyi.com</div>
<div class="abs tc " style="left:824px;top:188px;width:134px;">16816816888</div>
<div class="abs tc " style="left:958px;top:188px;width:89px;">-</div>
<div class="abs tc " style="left:1047px;top:188px;width:185.5px;">2022-10-09 10:44:27</div>
<div class="abs tc ip" style="left:1232.5px;top:188px;width:156.5px;">199.19.108.97</div>
<div class="abs tc " style="left:1389px;top:188px;width:184.5px;">2022-10-09 10:44:27</div>
<div class="abs tc ip" style="left:1573.5px;top:188px;width:139.0px;">199.19.108.97</div>
<div class="abs" style="left:1733px;top:191px;width:12px;height:12px;border-radius:50%;background:#18bc9c"></div>
<div class="abs ok" style="left:1749px;top:188px;line-height:18px"><i class="c">正</i><i class="c">常</i></div>
<div class="abs" style="left:1819px;top:186px;width:23px;height:22px;border-radius:3px;background:#18bc9c"><svg class="abs" style="left:6px;top:5px" width="11" height="11" viewBox="0 0 12 12"><path d="M8.6 0.6 L11.4 3.4 L4 10.8 L1.2 8 Z" fill="#fff"/><path d="M0.8 8.6 L3.4 11.2 L0 12 Z" fill="#fff"/></svg></div>
<div class="abs" style="left:1846px;top:186px;width:21px;height:22px;border-radius:3px;background:#f75444"><svg class="abs" style="left:5px;top:5px" width="10" height="12" viewBox="0 0 11 13"><path d="M3.5 0h4v1.4h3.5v1.6h-11v-1.6h3.5zM1 3.6h9l-0.6 9.4h-7.8z" fill="#fff"/><g fill="#f75444"><rect x="3" y="5.2" width="1" height="6"/><rect x="5" y="5.2" width="1" height="6"/><rect x="7" y="5.2" width="1" height="6"/></g></svg></div>
<div class="abs cb" style="left:275px;top:236px"></div>
<div class="abs tc " style="left:304px;top:235px;width:52px;">2</div>
<div class="abs tc " style="left:356px;top:235px;width:84px;">-</div>
<div class="abs tc " style="left:440px;top:235px;width:91.5px;">xiaoqi</div>
<div class="abs tc " style="left:531.5px;top:235px;width:92.0px;">xiaoqi</div>
<div class="abs tc " style="left:623.5px;top:235px;width:200.5px;">xiaoqi@xiaoqi.com</div>
<div class="abs tc " style="left:824px;top:235px;width:134px;">13666666666</div>
<div class="abs tc " style="left:958px;top:235px;width:89px;">-</div>
<div class="abs tc " style="left:1047px;top:235px;width:185.5px;">2022-10-09 10:42:22</div>
<div class="abs tc ip" style="left:1232.5px;top:235px;width:156.5px;">199.19.108.97</div>
<div class="abs tc " style="left:1389px;top:235px;width:184.5px;">2022-10-09 10:42:22</div>
<div class="abs tc ip" style="left:1573.5px;top:235px;width:139.0px;">199.19.108.97</div>
<div class="abs" style="left:1733px;top:238px;width:12px;height:12px;border-radius:50%;background:#18bc9c"></div>
<div class="abs ok" style="left:1749px;top:235px;line-height:18px"><i class="c">正</i><i class="c">常</i></div>
<div class="abs" style="left:1819px;top:233px;width:23px;height:22px;border-radius:3px;background:#18bc9c"><svg class="abs" style="left:6px;top:5px" width="11" height="11" viewBox="0 0 12 12"><path d="M8.6 0.6 L11.4 3.4 L4 10.8 L1.2 8 Z" fill="#fff"/><path d="M0.8 8.6 L3.4 11.2 L0 12 Z" fill="#fff"/></svg></div>
<div class="abs" style="left:1846px;top:233px;width:21px;height:22px;border-radius:3px;background:#f75444"><svg class="abs" style="left:5px;top:5px" width="10" height="12" viewBox="0 0 11 13"><path d="M3.5 0h4v1.4h3.5v1.6h-11v-1.6h3.5zM1 3.6h9l-0.6 9.4h-7.8z" fill="#fff"/><g fill="#f75444"><rect x="3" y="5.2" width="1" height="6"/><rect x="5" y="5.2" width="1" height="6"/><rect x="7" y="5.2" width="1" height="6"/></g></svg></div>
<div class="abs cb" style="left:275px;top:283px"></div>
<div class="abs tc " style="left:304px;top:282px;width:52px;">1</div>
<div class="abs tc " style="left:356px;top:282px;width:84px;"><i class="c">默</i><i class="c">认</i><i class="c">组</i></div>
<div class="abs tc " style="left:440px;top:282px;width:91.5px;">xiaogao</div>
<div class="abs tc " style="left:531.5px;top:282px;width:92.0px;">xiaogao</div>
<div class="abs tc " style="left:623.5px;top:282px;width:200.5px;">xiaogao@xiaogao.com</div>
<div class="abs tc " style="left:824px;top:282px;width:134px;">13888888888</div>
<div class="abs tc " style="left:958px;top:282px;width:89px;">-</div>
<div class="abs tc " style="left:1047px;top:282px;width:185.5px;">2022-11-10 12:40:52</div>
<div class="abs tc ip" style="left:1232.5px;top:282px;width:156.5px;">116.206.101.158</div>
<div class="abs tc " style="left:1389px;top:282px;width:184.5px;">2022-10-09 10:34:54</div>
<div class="abs tc ip" style="left:1573.5px;top:282px;width:139.0px;">199.19.108.97</div>
<div class="abs" style="left:1733px;top:285px;width:12px;height:12px;border-radius:50%;background:#18bc9c"></div>
<div class="abs ok" style="left:1749px;top:282px;line-height:18px"><i class="c">正</i><i class="c">常</i></div>
<div class="abs" style="left:1819px;top:280px;width:23px;height:22px;border-radius:3px;background:#18bc9c"><svg class="abs" style="left:6px;top:5px" width="11" height="11" viewBox="0 0 12 12"><path d="M8.6 0.6 L11.4 3.4 L4 10.8 L1.2 8 Z" fill="#fff"/><path d="M0.8 8.6 L3.4 11.2 L0 12 Z" fill="#fff"/></svg></div>
<div class="abs" style="left:1846px;top:280px;width:21px;height:22px;border-radius:3px;background:#f75444"><svg class="abs" style="left:5px;top:5px" width="10" height="12" viewBox="0 0 11 13"><path d="M3.5 0h4v1.4h3.5v1.6h-11v-1.6h3.5zM1 3.6h9l-0.6 9.4h-7.8z" fill="#fff"/><g fill="#f75444"><rect x="3" y="5.2" width="1" height="6"/><rect x="5" y="5.2" width="1" height="6"/><rect x="7" y="5.2" width="1" height="6"/></g></svg></div>
<div class="abs" style="left:259px;top:333px;line-height:18px;font-size:14px;color:#333"><i class="c">显</i><i class="c">示</i><i class="c">第</i> 1 <i class="c">到</i><i class="c">第</i> 3 <i class="c">条</i><i class="c">记</i><i class="c">录</i><i class="c">，</i><i class="c">总</i><i class="c">共</i> 3 <i class="c">条</i><i class="c">记</i><i class="c">录</i></div>
</body></html>
